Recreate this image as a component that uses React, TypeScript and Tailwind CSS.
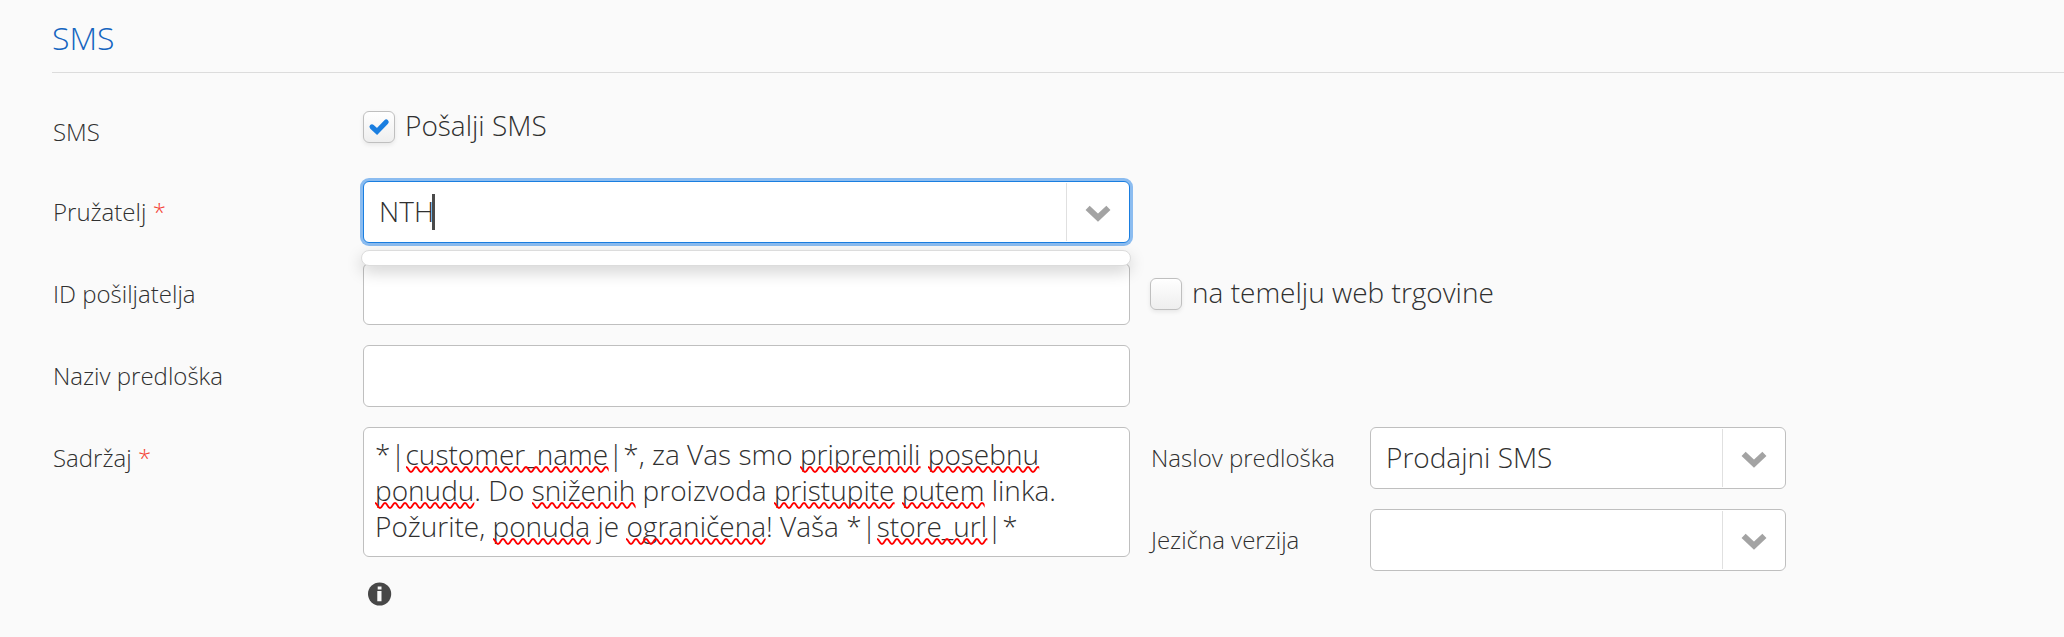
import { useLayoutEffect, useRef, useState } from "react";
import type { ReactNode } from "react";

const LABEL = "flex h-[62px] items-center pl-px text-[24px] leading-8 whitespace-pre";
const FIELD =
  "h-[62px] w-full rounded-[6px] border border-[#bfbfbf] bg-white pb-[2px] text-[28px] text-[#303030] outline-none";
const ROW = "grid grid-cols-[311px_767fr_934fr]";

const MESSAGE =
  "*|customer_name|*, za Vas smo pripremili posebnu ponudu. Do sniženih proizvoda pristupite putem linka. Požurite, ponuda je ograničena! Vaša *|store_url|*";
const FLAGGED =
  /customer_name|pripremili|posebnu|ponudu|sniženih|pristupite|putem|ponuda|ograničena|store_url/g;

type Mark = { x: number; line: number; width: number };

function Chevron() {
  return (
    <span className="pointer-events-none absolute inset-y-[2px] right-0 flex w-16 items-center justify-center border-l border-[#e0e0e0] pr-[2px]">
      <svg width="26" height="17" viewBox="0 0 26 17" className="mt-[3px]" fill="none" aria-hidden="true">
        <path d="M2.6 2.9 L13 12.6 L23.4 2.9" stroke="#a3a3a3" strokeWidth="6" />
      </svg>
    </span>
  );
}

function Required() {
  return <span className="text-[#f44336]"> *</span>;
}

function Check({ id, label, initial }: { id: string; label: string; initial: boolean }) {
  const [on, setOn] = useState(initial);
  return (
    <div className="flex items-center gap-[10px]">
      <span className="relative flex">
        <input
          id={id}
          type="checkbox"
          checked={on}
          onChange={(e) => setOn(e.target.checked)}
          className="size-8 appearance-none rounded-[6px] border border-[#bfbfbf] bg-linear-to-b from-white to-[#eeeeee] shadow-[0_2px_4px_rgba(0,0,0,0.08)]"
        />
        {on && (
          <svg
            viewBox="0 0 32 32"
            className="pointer-events-none absolute inset-0 size-8"
            fill="none"
            aria-hidden="true"
          >
            <path
              d="M9 15.8 L14 20.4 L23.2 11"
              stroke="#1a7ee0"
              strokeWidth="5"
              strokeLinecap="round"
              strokeLinejoin="miter"
            />
          </svg>
        )}
      </span>
      <label htmlFor={id} className="pb-1 text-[28px] leading-8">
        {label}
      </label>
    </div>
  );
}

function SelectBox({ id, children }: { id: string; children: ReactNode }) {
  return (
    <div className="relative">
      <select id={id} className={`${FIELD} appearance-none pr-16 pl-[15px]`}>
        {children}
      </select>
      <Chevron />
    </div>
  );
}

function findMarks(text: string, font: string, available: number): Mark[] {
  const ctx = document.createElement("canvas").getContext("2d");
  if (!ctx) return [];
  ctx.font = font;
  const lines: string[] = [];
  let current = "";
  for (const word of text.split(" ")) {
    const next = current ? `${current} ${word}` : word;
    if (current && ctx.measureText(next).width > available) {
      lines.push(current);
      current = word;
    } else {
      current = next;
    }
  }
  lines.push(current);
  return lines.flatMap((content, line) =>
    [...content.matchAll(FLAGGED)].map((m) => ({
      x: ctx.measureText(content.slice(0, m.index)).width,
      line,
      width: ctx.measureText(m[0]).width,
    }))
  );
}

function SpellcheckedText({ id }: { id: string }) {
  const [message, setMessage] = useState(MESSAGE);
  const [marks, setMarks] = useState<Mark[]>([]);
  const box = useRef<HTMLTextAreaElement>(null);

  useLayoutEffect(() => {
    const measure = () => {
      if (!box.current) return;
      const s = getComputedStyle(box.current);
      const available = box.current.clientWidth - parseFloat(s.paddingLeft) - parseFloat(s.paddingRight);
      setMarks(findMarks(message, `${s.fontWeight} ${s.fontSize} ${s.fontFamily}`, available));
    };
    measure();
    window.addEventListener("resize", measure);
    return () => window.removeEventListener("resize", measure);
  }, [message]);

  return (
    <div className="relative flex rounded-[6px] border border-[#bfbfbf] bg-white">
      <textarea
        id={id}
        ref={box}
        rows={3}
        spellCheck={false}
        value={message}
        onChange={(e) => setMessage(e.target.value)}
        className="w-full resize-none overflow-hidden px-[11px] pt-2 pb-3 text-[28px] leading-9 outline-none"
      />
      <svg className="pointer-events-none absolute inset-0 size-full" aria-hidden="true">
        <defs>
          <pattern id="squiggle" width="10" height="7" patternUnits="userSpaceOnUse">
            <path d="M-2.5 3.5 Q0 -1.5 2.5 3.5 T7.5 3.5 T12.5 3.5" fill="none" stroke="#ff0000" strokeWidth="1.8" />
          </pattern>
        </defs>
        {marks.map((m, i) => (
          <g key={i} transform={`translate(${Math.round(11 + m.x)} ${38 + m.line * 36})`}>
            <rect width={m.width} height="7" fill="url(#squiggle)" />
          </g>
        ))}
      </svg>
    </div>
  );
}

export default function App() {
  const [provider, setProvider] = useState("NTH");

  return (
    <main className="min-h-screen bg-[#fafafa] pl-[52px] font-['Open_Sans',sans-serif] font-light text-[#303030]">
      <h2 className="border-b border-[#dcdcdc] pt-[18px] pb-[14px] text-[32px] leading-10 text-[#1565c0]">
        SMS
      </h2>
      <form className="flex flex-col gap-5 pt-[26px]">
        <div className={ROW}>
          <span className={`${LABEL} pt-1`}>SMS</span>
          <div className="pt-[10px]">
            <Check id="send" label="Pošalji SMS" initial />
          </div>
        </div>

        <div className={ROW}>
          <label htmlFor="provider" className={LABEL}>
            Pružatelj
            <Required />
          </label>
          <div className="relative">
            <input
              id="provider"
              role="combobox"
              aria-expanded="true"
              aria-controls="provider-list"
              value={provider}
              onChange={(e) => setProvider(e.target.value)}
              className="h-[62px] w-full rounded-[6px] border border-[#1a7ee0] bg-white pr-16 pb-[2px] pl-[15px] text-[28px] caret-transparent shadow-[0_0_0_3px_#8bbcf0] outline-none"
            />
            <span className="absolute top-[13px] left-[69px] h-9 w-[3px] bg-[#4a4a4a]" />
            <Chevron />
            <ul
              id="provider-list"
              role="listbox"
              className="absolute top-[69px] -right-px -left-[2px] z-10 h-4 rounded-[8px] border border-[#dcdcdc] bg-white shadow-[0_6px_16px_rgba(0,0,0,0.18)]"
            />
          </div>
        </div>

        <div className={ROW}>
          <label htmlFor="sender" className={LABEL}>
            ID pošiljatelja
          </label>
          <input id="sender" className={`${FIELD} px-4`} />
          <div className="flex items-center pl-5">
            <Check id="store-based" label="na temelju web trgovine" initial={false} />
          </div>
        </div>

        <div className={ROW}>
          <label htmlFor="template-name" className={LABEL}>
            Naziv predloška
          </label>
          <input id="template-name" className={`${FIELD} px-4`} />
        </div>

        <div className={ROW}>
          <label htmlFor="content" className={LABEL}>
            Sadržaj
            <Required />
          </label>
          <div>
            <SpellcheckedText id="content" />
            <button type="button" aria-label="Info" className="mt-[25px] ml-[5px] flex">
              <svg width="24" height="24" viewBox="0 0 24 24" aria-hidden="true">
                <circle cx="11.6" cy="12" r="11.6" fill="#474747" />
                <path d="M9.7 4.6h3.8v2.8H9.7z M9.3 8.9h4.2v10.3H9.3z" fill="#fafafa" />
              </svg>
            </button>
          </div>
          <div className="grid grid-cols-[220px_3fr_2fr] content-start gap-y-5 pl-5">
            <label htmlFor="template" className={LABEL}>
              Naslov predloška
            </label>
            <SelectBox id="template">
              <option>Prodajni SMS</option>
            </SelectBox>
            <label htmlFor="language" className={`${LABEL} col-start-1`}>
              Jezična verzija
            </label>
            <SelectBox id="language">
              <option></option>
            </SelectBox>
          </div>
        </div>
      </form>
    </main>
  );
}
